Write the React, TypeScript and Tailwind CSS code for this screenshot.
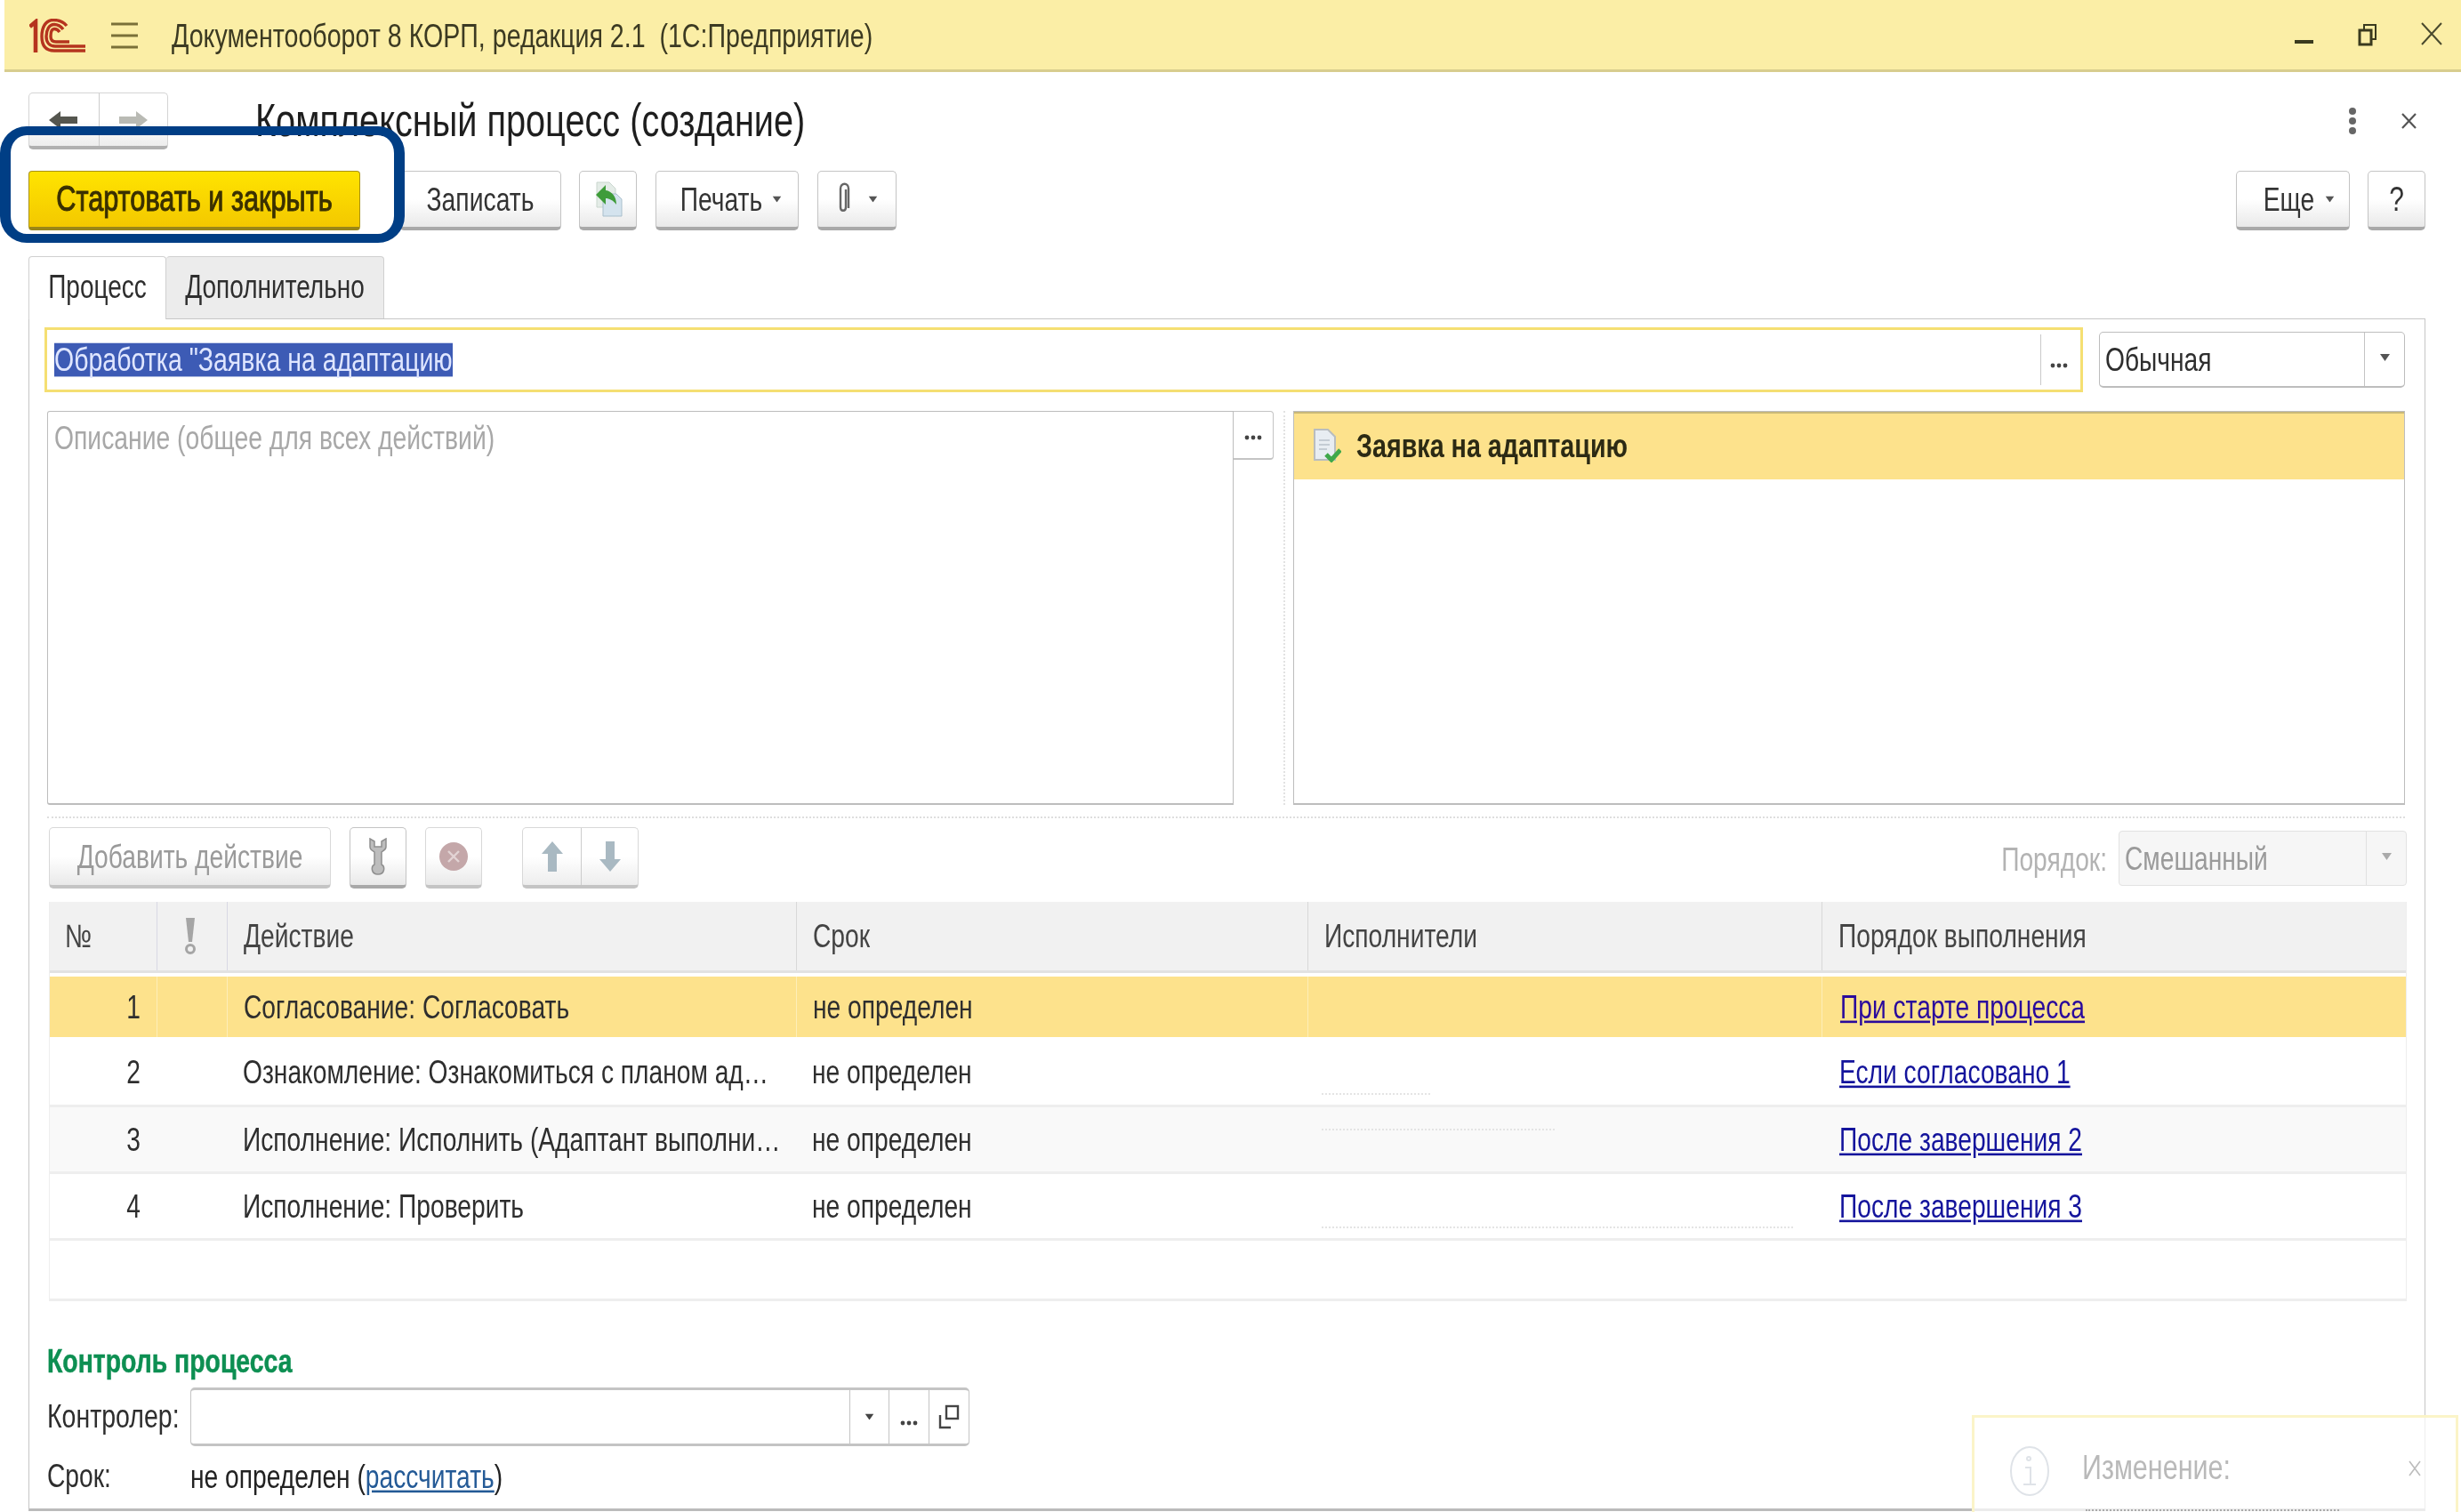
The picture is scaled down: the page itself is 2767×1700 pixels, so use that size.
import React from "react";

function T({ children, className = "" }: { children: React.ReactNode; className?: string }) {
  return <span className={"inline-block scale-y-[1.3] whitespace-nowrap leading-none " + className}>{children}</span>;
}

function Btn({ children, className = "" }: { children?: React.ReactNode; className?: string }) {
  return (
    <div className={"flex h-[67px] items-center justify-center rounded-[5px] border border-[#c4c4c4] border-b-[4px] border-b-[#a9a9a9] bg-linear-to-b from-white from-50% to-[#e9e9e9] text-[#333] " + className}>
      {children}
    </div>
  );
}

function Caret({ className = "" }: { className?: string }) {
  return (
    <svg width="11" height="8" viewBox="0 0 11 8" className={className}>
      <path d="M0 0H11L5.5 8Z" fill="currentColor" />
    </svg>
  );
}

function Dots({ color = "#444" }: { color?: string }) {
  return (
    <svg width="20" height="6" viewBox="0 0 20 6">
      <circle cx="3" cy="3" r="2.4" fill={color} />
      <circle cx="10" cy="3" r="2.4" fill={color} />
      <circle cx="17" cy="3" r="2.4" fill={color} />
    </svg>
  );
}

function Logo() {
  return (
    <svg width="63" height="38" viewBox="0 0 63 38" fill="none" stroke="#b5341e" strokeWidth="3.4">
      <path d="M0.5 9 L7 3.5 V38" strokeWidth="4.6" />
      <path d="M42 8 C38 3 32 1.5 27 1.5 C18 1.5 14 10 14 20 C14 30 18 36 28 36 H63" />
      <path d="M38 12 C35 8 31 6.5 28 6.5 C22 6.5 19 13 19 20 C19 27 23 31 29 31 H63" />
      <path d="M34 15 C32 12 30 11.5 28 11.5 C25 11.5 24 15 24 20 C24 24 26 26 30 26 H45" />
    </svg>
  );
}

const rows = [
  { n: "1", a: "Согласование: Согласовать", l: "При старте процесса", r: "h-[68px] bg-[#fde28c]", link: "text-[#2a0a9c]", d: "" },
  { n: "2", a: "Ознакомление: Ознакомиться с планом ад…", l: "Если согласовано 1", r: "h-[77px] bg-white border-b-[3px] border-[#eeeeee]", link: "text-[#14149c]", d: "mt-[61px] w-[122px]" },
  { n: "3", a: "Исполнение: Исполнить (Адаптант выполни…", l: "После завершения 2", r: "h-[75px] bg-[#f9f9f9] border-b-[3px] border-[#eeeeee]", link: "text-[#14149c]", d: "mt-[24px] w-[262px]" },
  { n: "4", a: "Исполнение: Проверить", l: "После завершения 3", r: "h-[75px] bg-white border-b-[3px] border-[#eeeeee]", link: "text-[#14149c]", d: "mt-[59px] w-[530px]" },
];

export default function App() {
  return (
    <div className="relative h-[1700px] w-[2767px] overflow-hidden bg-white font-['Liberation_Sans',Arial,sans-serif] text-[#2e2e2e] blur-[0.5px]">
      {/* title bar */}
      <div className="ml-[5px] flex h-[81px] items-center border-b-[3px] border-[#d8cd8e] bg-[#fbeea6] text-[#3c3a22]">
        <div className="ml-[28px] mt-[2px]"><Logo /></div>
        <svg width="30" height="30" viewBox="0 0 30 30" className="ml-[29px] mt-[1px]" stroke="#7a7038" strokeWidth="3">
          <path d="M0 2H30M0 15H30M0 28H30" />
        </svg>
        <T className="ml-[38px] mt-[3px] text-[28.6px]">Документооборот 8 КОРП, редакция 2.1&nbsp; (1С:Предприятие)</T>
        <div className="ml-auto flex items-center">
          <div className="mt-[16px] h-[4px] w-[21px] bg-[#3a3a1e]" />
          <svg width="22" height="26" viewBox="0 0 22 26" fill="none" stroke="#3a3a1e" strokeWidth="3" className="ml-[50px]">
            <rect x="2" y="8" width="13" height="16" />
            <path d="M7 7V2H20V18H16" strokeWidth="2" />
          </svg>
          <svg width="24" height="26" viewBox="0 0 24 26" fill="none" stroke="#4a4a2e" strokeWidth="2" className="ml-[49px] mr-[21px] mb-[2px]">
            <path d="M1 1L23 25M23 1L1 25" />
          </svg>
        </div>
      </div>

      <div className="pl-[32px] pr-[40px]">
        {/* header row */}
        <div className="mt-[23px] flex h-[64px] items-center">
          <div className="flex h-[64px] w-[157px] rounded-[5px] border border-[#d4d4d4] border-b-[4px] border-b-[#b0b0b0] bg-linear-to-b from-white from-50% to-[#ededed]">
            <div className="flex w-[79px] items-center justify-center border-r border-[#cccccc]">
              <svg width="32" height="22" viewBox="0 0 32 22" className="ml-[-2px]"><path d="M0 11L13 1V7H32V15H13V21Z" fill="#55564f" /></svg>
            </div>
            <div className="flex flex-1 items-center justify-center">
              <svg width="32" height="22" viewBox="0 0 32 22"><path d="M32 11L19 1V7H0V15H19V21Z" fill="#b9bab4" /></svg>
            </div>
          </div>
          <T className="ml-[98px] text-[39.7px] text-[#1e1e1e]">Комплексный процесс (создание)</T>
          <div className="ml-auto flex items-center">
            <svg width="10" height="32" viewBox="0 0 10 32" fill="#666" className="mr-[-4px]"><circle cx="5" cy="5" r="4" /><circle cx="5" cy="16" r="4" /><circle cx="5" cy="27" r="4" /></svg>
            <svg width="17" height="18" viewBox="0 0 17 18" fill="none" stroke="#555" strokeWidth="2.2" className="ml-[54px] mr-[10px]"><path d="M1 1L16 17M16 1L1 17" /></svg>
          </div>
        </div>

        {/* command bar */}
        <div className="mt-[24px] flex h-[67px]">
          <div className="flex h-[67px] w-[373px] items-center justify-center rounded-[4px] border border-[#a89214] border-b-[4px] border-b-[#9a8618] bg-linear-to-b from-[#ffe400] to-[#f3c800] text-[#3a3000]">
            <T className="text-[30.7px] [-webkit-text-stroke:0.8px_#3a3000]">Стартовать и закрыть</T>
          </div>
          <Btn className="ml-[44px] w-[182px]"><T className="text-[28.3px]">Записать</T></Btn>
          <Btn className="ml-[20px] w-[65px] border-[#b5b5b5]">
            <svg width="32" height="42" viewBox="0 0 32 42">
              <path d="M3 2H17L24 9V30H3Z" fill="#e4ece7" stroke="#c9d6ce" />
              <path d="M10 15H25L31 21V40H10Z" fill="#d4e3ee" stroke="#a9bfcc" />
              <path d="M2 16L13 5V11C20 12 25 18 25 27C21 22 17 20 13 20V27Z" fill="#3f9c3a" />
            </svg>
          </Btn>
          <Btn className="ml-[21px] w-[161px] border-[#b5b5b5]">
            <T className="ml-[9px] text-[28.2px]">Печать</T>
            <Caret className="ml-[11px] scale-90 text-[#555]" />
          </Btn>
          <Btn className="ml-[21px] w-[89px] border-[#b5b5b5]">
            <svg width="16" height="40" viewBox="0 0 16 38" fill="none" stroke="#666" strokeWidth="2.4">
              <path d="M11 8V28C11 33 5 33 5 28V7C5 0 14 0 14 7V29" />
            </svg>
            <Caret className="ml-[20px] scale-90 text-[#555]" />
          </Btn>
          <div className="ml-auto flex">
            <Btn className="w-[128px] border-[#b5b5b5]">
              <T className="ml-[14px] text-[28.2px]">Еще</T>
              <Caret className="ml-[12px] scale-90 text-[#555]" />
            </Btn>
            <Btn className="ml-[20px] w-[65px] border-[#b5b5b5]"><T className="text-[30px]">?</T></Btn>
          </div>
        </div>

        {/* tabs */}
        <div className="mt-[29px] flex h-[71px] items-stretch">
          <div className="relative z-10 flex h-[71px] w-[155px] items-center justify-center rounded-t-[4px] border border-b-0 border-[#d0d0d0] bg-white pb-[2px]">
            <T className="text-[28px]">Процесс</T>
          </div>
          <div className="flex h-[70px] w-[245px] items-center justify-center rounded-t-[4px] border border-l-0 border-b-0 border-[#d0d0d0] bg-[#ececec] pb-[2px]">
            <T className="text-[28px]">Дополнительно</T>
          </div>
        </div>

        {/* panel */}
        <div className="mt-[-1px] h-[1341px] border border-b-[3px] border-[#c6c6c6] border-b-[#bbbbbb] pl-[20px] pr-[22px]">
          {/* subject row */}
          <div className="mt-[9px] flex h-[73px] items-center">
            <div className="ml-[-3px] flex h-[73px] w-[2292px] items-stretch border-[3px] border-[#f5df72] bg-white py-[5px]">
              <div className="flex flex-1 items-center pl-[8px]">
                <T className="bg-[#3d5bb5] text-[28.5px] text-[#dfe6ff]">Обработка "Заявка на адаптацию</T>
              </div>
              <div className="flex w-[45px] items-center justify-center border-l border-[#c9c9c9] pr-[4px] pt-[12px]"><Dots /></div>
            </div>
            <div className="ml-[18px] flex h-[63px] flex-1 rounded-[5px] border border-b-[2px] border-[#bdbdbd]">
              <div className="flex flex-1 items-center pl-[6px]"><T className="text-[28.2px]">Обычная</T></div>
              <div className="flex w-[45px] items-center justify-center border-l border-[#c4c4c4] pb-[4px]"><Caret className="text-[#555]" /></div>
            </div>
          </div>

          {/* description + request */}
          <div className="mt-[21px] flex h-[443px]">
            <div className="h-full w-[1334px] rounded-l-[3px] border border-b-[2px] border-[#bdbdbd] pl-[7px] pt-[15px]">
              <T className="text-[28.3px] text-[#a8a8a8]">Описание (общее для всех действий)</T>
            </div>
            <div className="flex h-[55px] w-[45px] items-center justify-center rounded-r-[4px] border border-l-0 border-b-[2px] border-[#c4c4c4] pt-[6px]"><Dots /></div>
            <div className="ml-[11px] h-full w-0 border-l-2 border-dotted border-[#e2e2e2]" />
            <div className="ml-[9px] h-full flex-1 border border-b-[2px] border-[#bdbdbd]">
              <div className="flex h-[76px] items-center border-t-2 border-[#c9b878] bg-[#fde28c] pb-[2px] pl-[21px]">
                <svg width="32" height="38" viewBox="0 0 32 38">
                  <path d="M2 1H17L25 9V35H2Z" fill="#e8edf2" stroke="#b9bdbf" strokeWidth="2" />
                  <path d="M7 13H19M7 18H19M7 23H16" stroke="#c4ccd4" strokeWidth="2" />
                  <path d="M15 29L21 35L31 24" stroke="#3fa84a" strokeWidth="5" fill="none" />
                </svg>
                <T className="ml-[17px] text-[28.7px] font-bold text-[#2c2a14]">Заявка на адаптацию</T>
              </div>
            </div>
          </div>

          <div className="mt-[13px] border-t-2 border-dotted border-[#dedede]" />

          {/* actions toolbar */}
          <div className="ml-[2px] mr-[-2px] mt-[10px] flex h-[69px] items-start">
            <Btn className="h-[69px] w-[317px] border-[#d8d8d8] border-b-[#c4c4c4]"><T className="text-[28.2px] text-[#9a9a9a]">Добавить действие</T></Btn>
            <Btn className="ml-[21px] h-[69px] w-[64px] border-[#9e9e9e] border-b-[#9e9e9e]">
              <svg width="26" height="42" viewBox="0 0 26 42">
                <path d="M4 1V10C4 14 8 15 9 16V30C5 32 5 41 13 41C21 41 21 32 17 30V16C18 15 22 14 22 10V1L17 4V10H9V4Z" fill="#bdbdbd" stroke="#8f8f8f" strokeWidth="1.5" />
              </svg>
            </Btn>
            <Btn className="ml-[21px] h-[69px] w-[64px] border-[#d8d8d8] border-b-[#c4c4c4]">
              <svg width="34" height="34" viewBox="0 0 34 34">
                <circle cx="17" cy="17" r="16" fill="#c4a7a9" />
                <path d="M11 11L23 23M23 11L11 23" stroke="#e2d3d4" strokeWidth="2.4" />
              </svg>
            </Btn>
            <div className="ml-[45px] flex h-[69px] w-[131px] rounded-[5px] border border-[#d8d8d8] border-b-[4px] border-b-[#c4c4c4] bg-linear-to-b from-white from-50% to-[#ededed]">
              <div className="flex w-[66px] items-center justify-center border-r border-[#cccccc]">
                <svg width="26" height="34" viewBox="0 0 26 34"><path d="M13 0L25 14H18V34H8V14H1Z" fill="#a9b9c2" /></svg>
              </div>
              <div className="flex flex-1 items-center justify-center">
                <svg width="26" height="34" viewBox="0 0 26 34"><path d="M13 34L25 20H18V0H8V20H1Z" fill="#a9b9c2" /></svg>
              </div>
            </div>
            <div className="ml-auto flex items-center">
              <T className="mt-[6px] text-[28.2px] text-[#b3b3b3]">Порядок:</T>
              <div className="ml-[13px] mt-[4px] flex h-[62px] w-[324px] rounded-[4px] border border-[#e2e2e2] bg-[#f6f6f6]">
                <div className="flex flex-1 items-center pl-[6px]"><T className="text-[28.2px] text-[#9a9a9a]">Смешанный</T></div>
                <div className="flex w-[45px] items-center justify-center border-l border-[#e0e0e0] pb-[4px]"><Caret className="text-[#aaaaaa]" /></div>
              </div>
            </div>
          </div>

          {/* table */}
          <div className="ml-[2px] mr-[-2px] mt-[15px] h-[449px] border-x border-b-[3px] border-[#eeeeee]">
            <div className="grid h-[80px] grid-cols-[120px_79px_640px_575px_578px_1fr] border-b-[3px] border-[#e2e2e2] bg-[#f1f1f1] text-[#444]">
              <div className="flex items-center pl-[17px]"><T className="text-[28.2px]">№</T></div>
              <div className="flex items-center justify-center border-l border-[#d8d8e4]">
                <svg width="12" height="42" viewBox="0 0 12 42" fill="#a5a5a5" className="mr-[4px]">
                  <path d="M1 0H11L8 27H4Z" /><circle cx="6" cy="35" r="4.5" fill="none" stroke="#a5a5a5" strokeWidth="3" />
                </svg>
              </div>
              <div className="flex items-center border-l border-[#d8d8e4] pl-[18px]"><T className="text-[28.2px]">Действие</T></div>
              <div className="flex items-center border-l border-[#d8d8d8] pl-[18px]"><T className="text-[28.2px]">Срок</T></div>
              <div className="flex items-center border-l border-[#d8d8d8] pl-[18px]"><T className="text-[28.2px]">Исполнители</T></div>
              <div className="flex items-center border-l border-[#d8d8d8] pl-[18px]"><T className="text-[28.2px]">Порядок выполнения</T></div>
            </div>
            {rows.map((row, i) => (
              <div key={row.n} className={"grid grid-cols-[120px_79px_640px_575px_578px_1fr] " + row.r + (i === 0 ? " mt-[4px] mb-[2px]" : "")}>
                <div className="flex items-center justify-end pr-[18px]"><T className="text-[28.2px]">{row.n}</T></div>
                <div className={i === 0 ? "border-l border-[#fdeeb8]" : ""} />
                <div className={"flex items-center pl-[18px] " + (i === 0 ? "border-l border-[#fdeeb8]" : "")}><T className="text-[28.2px]">{row.a}</T></div>
                <div className={"flex items-center pl-[18px] " + (i === 0 ? "border-l border-[#fdeeb8]" : "")}><T className="text-[28.2px]">не определен</T></div>
                <div className={"pl-[16px] " + (i === 0 ? "border-l border-[#fdeeb8]" : "")}>
                  {row.d ? <div className={"border-t-2 border-dotted border-[#e4e4e4] " + row.d} /> : null}
                </div>
                <div className={"flex items-center pl-[20px] " + (i === 0 ? "border-l border-[#fdeeb8]" : "")}>
                  <T className={"text-[28.2px] underline " + row.link}>{row.l}</T>
                </div>
              </div>
            ))}
          </div>

          {/* control */}
          <div className="mt-[56px] flex h-[22px] items-center">
            <T className="text-[28.4px] font-semibold text-[#0d8f52] [-webkit-text-stroke:0.4px_#0d8f52]">Контроль процесса</T>
          </div>
          <div className="mt-[19px] flex h-[66px] items-center">
            <div className="w-[161px]"><T className="text-[28.5px]">Контролер:</T></div>
            <div className="flex h-[66px] w-[876px] rounded-[5px] border border-t-[3px] border-b-[3px] border-[#c4c4c4]">
              <div className="flex-1" />
              <div className="flex w-[44px] items-center justify-center border-l border-[#c4c4c4]"><Caret className="scale-90 text-[#444]" /></div>
              <div className="flex w-[45px] items-center justify-center border-l border-[#c4c4c4] pt-[14px]"><Dots /></div>
              <div className="flex w-[45px] items-center justify-center border-l border-[#c4c4c4]">
                <svg width="24" height="28" viewBox="0 0 24 28" fill="none" stroke="#444" strokeWidth="2.4">
                  <rect x="9" y="2" width="13" height="14" />
                  <path d="M2 12V26H14" />
                </svg>
              </div>
            </div>
          </div>
          <div className="mt-[17px] flex h-[34px] items-center">
            <div className="w-[161px]"><T className="text-[28.2px]">Срок:</T></div>
            <T className="text-[28.2px] text-[#222]">не определен (<span className="text-[#245a96] underline">рассчитать</span>)</T>
          </div>
        </div>
      </div>

      {/* notification toast */}
      <div className="absolute left-[2217px] top-[1591px] flex h-[130px] w-[547px] items-start border-[3px] border-[#fbf4c8] bg-white/70 pt-[32px]">
        <svg width="46" height="56" viewBox="0 0 46 56" fill="none" stroke="#dfe3e8" strokeWidth="2" className="ml-[39px]">
          <ellipse cx="23" cy="28" rx="21" ry="27" />
          <path d="M18 24H24V42M16 43H30" />
          <circle cx="22" cy="14" r="2" />
        </svg>
        <T className="ml-[36px] mt-[8px] text-[30.5px] text-[#b9b9b9]">Изменение:</T>
        <svg width="14" height="18" viewBox="0 0 14 18" fill="none" stroke="#bcbcbc" strokeWidth="1.6" className="ml-auto mr-[39px] mt-[16px]"><path d="M1 1L13 17M13 1L1 17" /></svg>
        <div className="absolute left-[125px] top-[103px] w-[285px] border-t-2 border-dotted border-[#aaaaaa]" />
      </div>

      {/* highlight frame */}
      <div className="absolute left-[0px] top-[142px] h-[131px] w-[455px] rounded-[30px] border-x-[12px] border-y-[10px] border-[#003e85]" />
    </div>
  );
}
